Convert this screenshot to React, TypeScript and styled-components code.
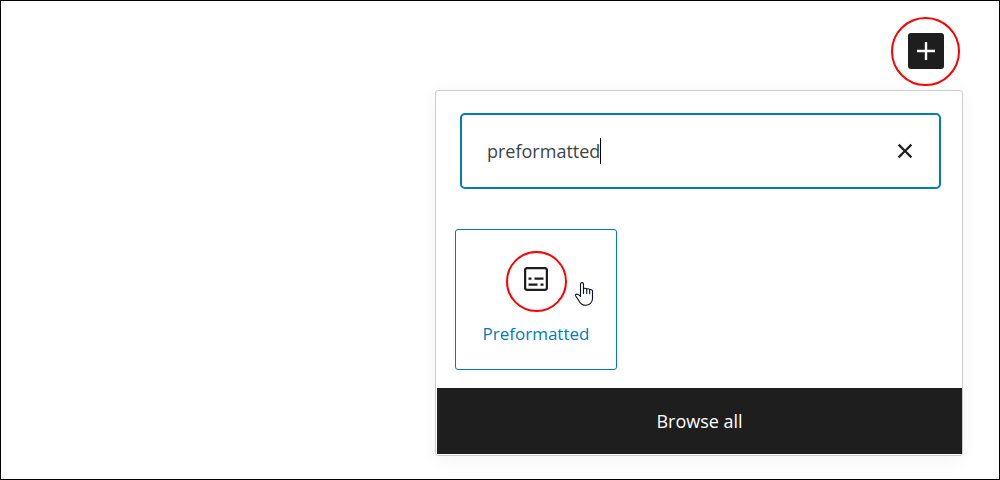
import React, { useState } from "react";
import styled, { createGlobalStyle } from "styled-components";

const GlobalStyle = createGlobalStyle`
  *, *::before, *::after { box-sizing: border-box; }
  body {
    margin: 0;
    background: #fff;
    font-family: "Open Sans", "Noto Sans", sans-serif;
  }
`;

const Canvas = styled.main`
  display: flex;
  flex-direction: column;
  align-items: flex-end;
  gap: 4px;
  min-height: 100vh;
  padding: 16px 36px 23px;
  border: 1px solid #000;
`;

const Ring = styled.span<{ $size: number }>`
  display: flex;
  align-items: center;
  justify-content: center;
  width: ${(p) => p.$size}px;
  height: ${(p) => p.$size}px;
  border: 2px solid #f00;
  border-radius: 50%;
`;

const ToggleRing = styled(Ring)`
  margin-right: 3px;
  padding-bottom: 2px;
`;

const IconButton = styled.button<{ $dark?: boolean }>`
  display: flex;
  width: 36px;
  height: 36px;
  padding: 0;
  border: 0;
  border-radius: 3px;
  background: ${(p) => (p.$dark ? "#1e1e1e" : "transparent")};
  color: ${(p) => (p.$dark ? "#fff" : "#1e1e1e")};
  cursor: pointer;
`;

const Glyph = styled.svg`
  display: block;
  width: 36px;
  height: 36px;
  flex: none;
  fill: currentColor;
`;

const Popover = styled.section`
  display: flex;
  flex-direction: column;
  width: 100%;
  max-width: 528px;
  padding: 1px 0 1px 1px;
  border: 1px solid #ccc;
  border-radius: 3px;
  background: #fff;
  box-shadow: 0 3px 20px rgba(0, 0, 0, 0.05);
`;

const SearchField = styled.div`
  display: flex;
  align-items: center;
  height: 76px;
  margin: 21px 21px 0 23px;
  padding: 0 16px 0 25px;
  border: 2px solid #007cba;
  border-radius: 5px;
`;

const SearchInput = styled.input`
  field-sizing: content;
  min-width: 1px;
  padding: 0;
  border: 0;
  outline: 0;
  background: none;
  color: #3c434a;
  caret-color: transparent;
  font: 400 18px/26px "Open Sans", "Noto Sans", sans-serif;
`;

const Caret = styled.span`
  width: 1px;
  height: 26px;
  margin-right: auto;
  background: #000;
`;

const Results = styled.div`
  display: flex;
  padding: 40px 18px 18px;
`;

const BlockTile = styled.button`
  position: relative;
  display: flex;
  flex-direction: column;
  align-items: center;
  gap: 9px;
  width: 162px;
  height: 141px;
  padding: 21px 0 0;
  border: 1px solid #007cba;
  border-radius: 3px;
  background: #fff;
  color: #007cba;
  font: 400 17px/26px "Open Sans", "Noto Sans", sans-serif;
  cursor: pointer;
`;

const BlockRing = styled(Ring)`
  padding-bottom: 5px;
  color: #1e1e1e;
`;

const Pointer = styled.svg`
  position: absolute;
  top: 52px;
  left: 119px;
  width: 20px;
  height: 26px;
`;

const BrowseAll = styled.button`
  height: 66px;
  padding: 0;
  border: 0;
  background: #1e1e1e;
  color: #fff;
  font: 400 18px/26px "Open Sans", "Noto Sans", sans-serif;
  cursor: pointer;
`;

export default function App() {
  const [query, setQuery] = useState("preformatted");

  return (
    <Canvas>
      <GlobalStyle />
      <ToggleRing $size={69}>
        <IconButton type="button" $dark aria-label="Add block">
          <Glyph viewBox="0 0 24 24" aria-hidden="true">
            <path d="M18 11.2h-5.2V6h-1.6v5.2H6v1.6h5.2V18h1.6v-5.2H18z" />
          </Glyph>
        </IconButton>
      </ToggleRing>
      <Popover>
        <SearchField>
          <SearchInput
            type="text"
            aria-label="Search for a block"
            value={query}
            onChange={(e) => setQuery(e.target.value)}
          />
          <Caret />
          <IconButton type="button" aria-label="Reset search" onClick={() => setQuery("")}>
            <Glyph viewBox="0 0 24 24" aria-hidden="true">
              <path d="M12 13.06l3.712 3.713 1.061-1.06L13.061 12l3.712-3.712-1.06-1.06L12 10.938 8.288 7.227l-1.061 1.06L10.939 12l-3.712 3.712 1.06 1.061L12 13.061z" />
            </Glyph>
          </IconButton>
        </SearchField>
        <Results>
          <BlockTile type="button">
            <BlockRing $size={61}>
              <Glyph viewBox="0 0 24 24" aria-hidden="true">
                <path d="M18 4H6c-1.1 0-2 .9-2 2v12c0 1.1.9 2 2 2h12c1.1 0 2-.9 2-2V6c0-1.1-.9-2-2-2zm.5 14c0 .3-.2.5-.5.5H6c-.3 0-.5-.2-.5-.5V6c0-.3.2-.5.5-.5h12c.3 0 .5.2.5.5v12zM7 16.5h6V15H7v1.5zm4-4h6V11h-6v1.5zM9 11H7v1.5h2V11zm6 5.5h2V15h-2v1.5z" />
              </Glyph>
            </BlockRing>
            Preformatted
            <Pointer viewBox="0 0 20 26" aria-hidden="true">
              <path
                d="M5.500 14.500V2.200C5.500 1.200 6.100.6 7 .6s1.500.6 1.500 1.600V6.600c.5-.5 2.700-.5 3.200.4.600-.4 2.600-.3 3 .6 1.200-.4 2.800.1 2.800 1.500v7.400c0 4-2.900 6.800-6.700 6.800-3.200 0-5.300-1.500-6.800-4.400L.6 13.800c-.4-.9.2-1.700 1.200-1.700 1.400 0 2.700 1 3.700 2.400z"
                fill="#fff"
                stroke="#101020"
                strokeWidth="1.1"
                strokeLinejoin="round"
              />
              <path
                d="M8.500 6.500v5M11.700 7v4.500M14.700 7.600v4.200"
                fill="none"
                stroke="#101020"
                strokeWidth="1.1"
                strokeLinecap="round"
              />
            </Pointer>
          </BlockTile>
        </Results>
        <BrowseAll type="button">Browse all</BrowseAll>
      </Popover>
    </Canvas>
  );
}
